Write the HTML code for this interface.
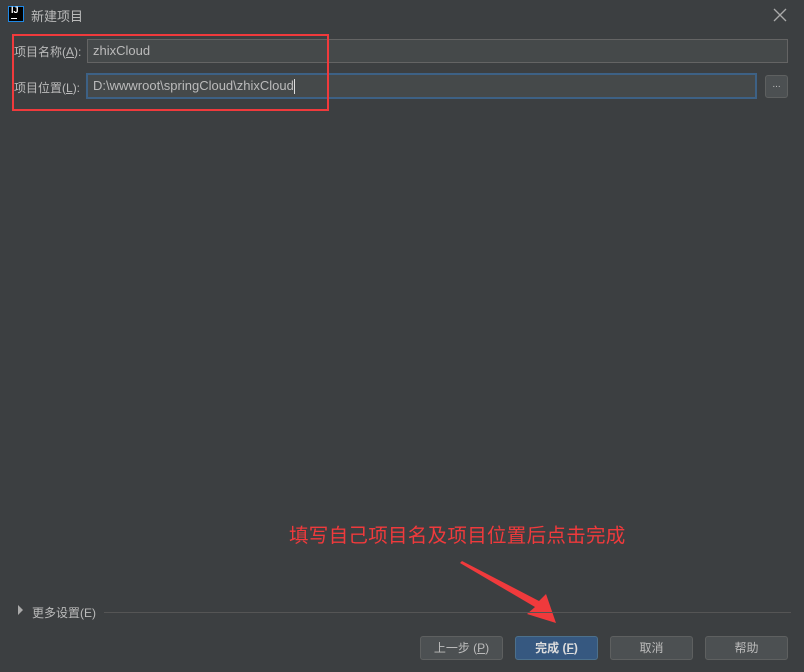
<!DOCTYPE html>
<html><head><meta charset="utf-8"><style>
*{box-sizing:border-box;margin:0;padding:0}
body{width:804px;height:672px;background:#3c3f41;font-family:"Liberation Sans","Noto Sans CJK SC",sans-serif;color:#bbbbbb;font-size:12px;position:relative;overflow:hidden}
.a{position:absolute}
.inp{position:absolute;background:#45494a;border:1px solid #646464;color:#bbb;font-size:13px;padding-left:5px;line-height:22px}
.btn{position:absolute;top:636px;width:83px;height:24px;background:#4c5052;border:1px solid #5e6060;border-radius:3px;text-align:center;line-height:22px;font-size:12px;color:#bbb}
</style></head><body>
<div class="a" style="left:8px;top:6px;width:16px;height:16px;background:#000;border:1px solid #1e88e5"></div>
<div class="a" style="left:11px;top:5px;font-size:9px;font-weight:bold;color:#fff">IJ</div>
<div class="a" style="left:11px;top:18px;width:6px;height:1px;background:#fff"></div>
<div class="a" style="left:31px;top:6px;font-size:13px;color:#bbb">新建项目</div>
<svg class="a" style="left:773px;top:8px" width="14" height="14"><path d="M1 1L13 13M13 1L1 13" stroke="#aaa" stroke-width="1.3"/></svg>
<div class="a" style="left:14px;top:43px;font-size:12px">项目名称(<u>A</u>):</div>
<div class="inp" style="left:87px;top:39px;width:701px;height:24px">zhixCloud</div>
<div class="a" style="left:14px;top:79px;font-size:12px">项目位置(<u>L</u>):</div>
<div class="inp" style="left:86px;top:73px;width:671px;height:26px;border:2px solid #3d6185;line-height:21px">D:\wwwroot\springCloud\zhixCloud<span style="display:inline-block;width:1px;height:15px;background:#ddd;vertical-align:middle"></span></div>
<div class="a" style="left:765px;top:75px;width:23px;height:23px;background:#4c5052;border:1px solid #5e6060;border-radius:3px;text-align:center;font-size:10px;line-height:18px">...</div>
<div class="a" style="left:12px;top:34px;width:317px;height:77px;border:2px solid #f03a3c"></div>
<div class="a" style="left:289px;top:519px;font-size:19.5px;color:#f03a3c;letter-spacing:0.3px">填写自己项目名及项目位置后点击完成</div>
<svg class="a" style="left:0;top:0" width="804" height="672"><polygon points="460,563 462,561 539,601 546,594 556,623 527,614 535,607" fill="#f03a3c"/><polygon points="18,605 23,610 18,615" fill="#aaa"/></svg>
<div class="a" style="left:32px;top:604px;font-size:12px">更多设置(E)</div>
<div class="a" style="left:104px;top:612px;width:687px;height:1px;background:#555"></div>
<div class="btn" style="left:420px">上一步 (<u>P</u>)</div>
<div class="btn" style="left:515px;background:#365880;border-color:#4c708c;color:#ddd;font-weight:bold">完成 (<u>F</u>)</div>
<div class="btn" style="left:610px">取消</div>
<div class="btn" style="left:705px">帮助</div>
</body></html>
